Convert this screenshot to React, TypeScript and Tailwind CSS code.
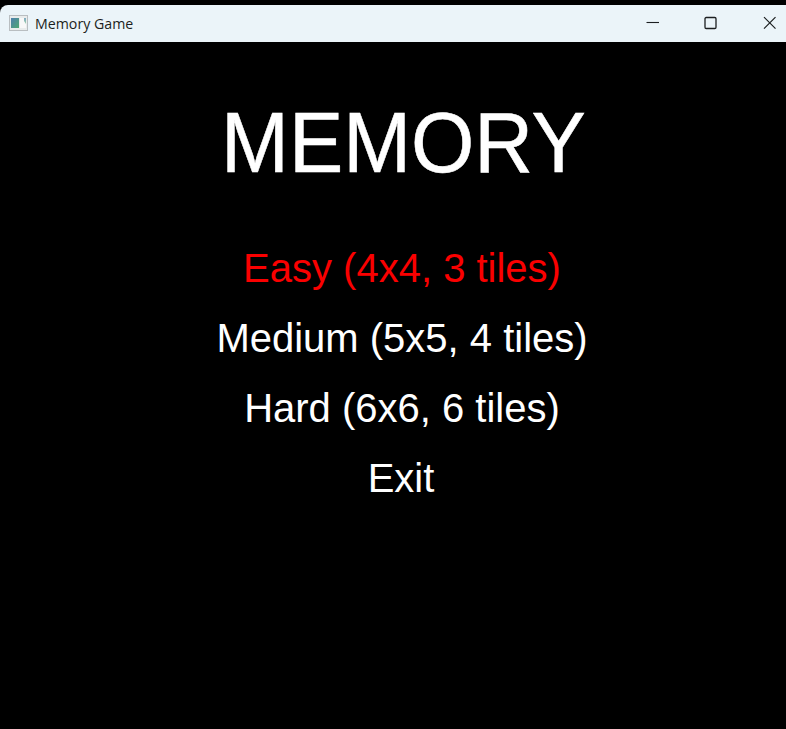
const items = [
  { label: 'Easy (4x4, 3 tiles)', style: 'text-[#fa0000]' },
  { label: 'Medium (5x5, 4 tiles)', style: 'text-white' },
  { label: 'Hard (6x6, 6 tiles)', style: 'text-white' },
  { label: 'Exit', style: 'text-white pr-[2px]' },
];

function AppIcon() {
  return (
    <svg width="19" height="16" viewBox="0 0 19 16" className="shrink-0">
      <defs>
        <linearGradient id="screen" x1="0" y1="0" x2="1" y2="1">
          <stop offset="0" stopColor="#4f7fae" />
          <stop offset="1" stopColor="#4fa873" />
        </linearGradient>
        <linearGradient id="strip" x1="0" y1="0" x2="0" y2="1">
          <stop offset="0" stopColor="#7fa9c4" />
          <stop offset="1" stopColor="#9fd0a8" />
        </linearGradient>
      </defs>
      <rect x="0.5" y="0.5" width="18" height="15" fill="#e9ecec" stroke="#b9bec1" />
      <rect x="2" y="3" width="8" height="10" fill="url(#screen)" />
      <rect x="11" y="3" width="6" height="10" fill="#f8f8f8" />
      <path d="M15 3H17V9L15 6Z" fill="url(#strip)" />
    </svg>
  );
}

export default function App() {
  return (
    <div className="flex h-[729px] w-[786px] flex-col overflow-hidden bg-black pt-[5px]">
      <header className="flex h-[37px] shrink-0 items-center rounded-tl-[8px] bg-[#ebf4f9] pl-[9px] text-[#1c1f21]">
        <div className="-mt-[2px]">
          <AppIcon />
        </div>
        <span className="ml-[7px] font-['Open_Sans',sans-serif] text-[14.2px]">Memory Game</span>
        <svg width="130" height="14" viewBox="0 0 130 14" fill="none" stroke="currentColor" className="-mt-px ml-auto mr-[10px]">
          <path d="M0.5 6.5H13" strokeWidth="1.1" />
          <rect x="59" y="1.5" width="11" height="11" rx="1.2" strokeWidth="1.3" />
          <path d="M118 1.2L129.5 12.7M129.5 1.2L118 12.7" strokeWidth="1.2" />
        </svg>
      </header>
      <main className="flex grow flex-col items-center pl-[18px] pt-[51px] font-['Liberation_Sans',Arial,sans-serif]">
        <h1 className="scale-y-[1.04] pl-[3px] text-[81.4px] leading-[100px] text-white [-webkit-text-stroke:0.5px_white]">MEMORY</h1>
        <ul className="mt-[40px] text-center text-[40px] leading-[70px]">
          {items.map((item) => (
            <li key={item.label} className={`scale-y-[1.03] ${item.style}`}>{item.label}</li>
          ))}
        </ul>
      </main>
    </div>
  );
}
